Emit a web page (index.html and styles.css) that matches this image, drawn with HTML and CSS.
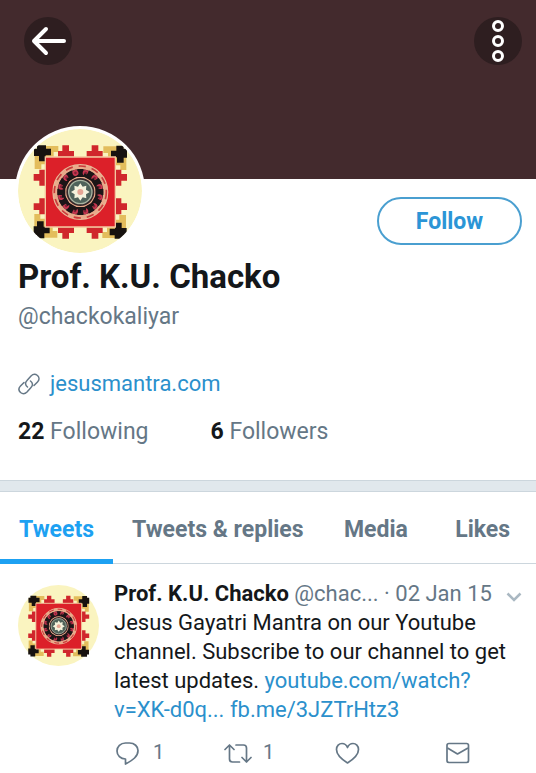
FILE: index.html
```html
<!DOCTYPE html>
<html lang="en">
<head>
<meta charset="utf-8">
<meta name="viewport" content="width=device-width, initial-scale=1">
<title>Prof. K.U. Chacko</title>
<link rel="stylesheet" href="styles.css">
</head>
<body>
<svg class="symbols" aria-hidden="true">
  <defs>
    <g id="side">
      <path fill="#e3bd5c" d="M108 79h40v18h-14v14h-36z"/>
      <path fill="#e3bd5c" d="M77 108v40h20v-14h14v-36z"/>
      <path fill="#17120f" d="M84 77h27v10h15v20h-16v18h-20v-16h-15v-22h9z"/>
      <path fill="#d0262c" d="M160 77h20v17h15v17h-48v-17h13zM248 77h20v17h13v17h-48v-17h15z"/>
    </g>
    <g id="petal">
      <path fill="#1c1517" d="M205 148h18v14h8v10h-34v-10h8z"/>
      <circle cx="230" cy="160" r="9" fill="#c93650"/>
      <circle cx="230" cy="160" r="4" fill="#7d2434"/>
    </g>
    <symbol id="mandala" viewBox="27 28 372 372">
      <circle cx="213" cy="214" r="186" fill="#faf4c0"/>
      <use href="#side"/>
      <use href="#side" transform="rotate(90 214 217)"/>
      <use href="#side" transform="rotate(180 214 217)"/>
      <use href="#side" transform="rotate(270 214 217)"/>
      <path fill="#dc2029" stroke="#f3c7a0" stroke-width="4" d="M109 112h210v210h-210z"/>
      <circle cx="214" cy="217" r="82" fill="#e9aa8a" stroke="#e8b796" stroke-width="4"/>
      <circle cx="214" cy="217" r="78" fill="none" stroke="#c93b3c" stroke-width="5" stroke-dasharray="22 18"/>
      <circle cx="214" cy="217" r="58" fill="none" stroke="#56252c" stroke-width="22"/>
      <use href="#petal"/>
      <use href="#petal" transform="rotate(30 214 217)"/>
      <use href="#petal" transform="rotate(60 214 217)"/>
      <use href="#petal" transform="rotate(90 214 217)"/>
      <use href="#petal" transform="rotate(120 214 217)"/>
      <use href="#petal" transform="rotate(150 214 217)"/>
      <use href="#petal" transform="rotate(180 214 217)"/>
      <use href="#petal" transform="rotate(210 214 217)"/>
      <use href="#petal" transform="rotate(240 214 217)"/>
      <use href="#petal" transform="rotate(270 214 217)"/>
      <use href="#petal" transform="rotate(300 214 217)"/>
      <use href="#petal" transform="rotate(330 214 217)"/>
      <circle cx="214" cy="217" r="42" fill="#35272a"/>
      <circle cx="214" cy="217" r="35" fill="#4f625a" stroke="#a9b5a1" stroke-width="4"/>
      <path fill="#f4f2dc" d="M214 191l7 10 11-3-1 12 11 7-11 7 1 12-11-3-7 10-7-10-11 3 1-12-11-7 11-7-1-12 11 3z"/>
      <circle cx="214" cy="217" r="9" fill="#e5a594"/>
    </symbol>
  </defs>
</svg>

<header class="banner">
  <button class="round-button" type="button" aria-label="Back">
    <svg viewBox="0 0 48 48"><path d="M40 24H10M22 12L10 24l12 12" fill="none" stroke="#fff" stroke-width="4" stroke-linecap="round" stroke-linejoin="round"/></svg>
  </button>
  <button class="round-button" type="button" aria-label="More options">
    <svg viewBox="0 0 48 48"><g fill="none" stroke="#fff" stroke-width="3"><circle cx="24" cy="9" r="4.500"/><circle cx="24" cy="24" r="4.500"/><circle cx="24" cy="39" r="4.500"/></g></svg>
  </button>
</header>

<main>
  <section class="profile">
    <div class="profile-top">
      <svg class="avatar" role="img" aria-label="Profile picture"><use href="#mandala"/></svg>
      <button class="follow" type="button">Follow</button>
    </div>
    <h1 class="name">Prof. K.U. Chacko</h1>
    <p class="handle">@chackokaliyar</p>
    <p class="website">
      <svg class="chain" viewBox="0 0 22 22" aria-hidden="true"><path d="M9.500 14C7 12 7 9.500 9 7.500l4-4.500c2-2 4.500-2 6.500-.5 2 2 2 4.500 0 6.500l-3.500 3.500M12.500 8c2.500 2 2.500 4.500.5 6.500l-4 4.500c-2 2-4.500 2-6.500.5-2-2-2-4.500 0-6.500L6 9.500" fill="none" stroke="currentColor" stroke-width="1.500" stroke-linecap="round"/></svg>
      <a href="#website">jesusmantra.com</a>
    </p>
    <div class="counts">
      <a href="#following"><strong>22</strong> Following</a>
      <a href="#followers"><strong>6</strong> Followers</a>
    </div>
  </section>

  <nav class="tabs">
    <a class="tab active" href="#tweets">Tweets</a>
    <a class="tab" href="#replies">Tweets &amp; replies</a>
    <a class="tab short" href="#media">Media</a>
    <a class="tab short" href="#likes">Likes</a>
  </nav>

  <article class="tweet">
    <svg class="tweet-avatar" aria-hidden="true"><use href="#mandala"/></svg>
    <div class="tweet-content">
      <div class="tweet-head">
        <p class="byline"><strong>Prof. K.U. Chacko</strong> @chac... · 02 Jan 15</p>
        <button class="icon-button" type="button" aria-label="Tweet options">
          <svg class="chevron" viewBox="0 0 16 16"><path d="M1.500 7.500L8 14l6.500-6.500" fill="none" stroke="#aab8c2" stroke-width="2.500"/></svg>
        </button>
      </div>
      <p class="tweet-text">Jesus Gayatri Mantra on our Youtube channel. Subscribe to our channel to get latest updates. <a href="#video">youtube.com/watch?<br>v=XK-d0q...</a> <a href="#post">fb.me/3JZTrHtz3</a></p>
      <div class="actions">
        <button class="icon-button" type="button" aria-label="Reply, 1">
          <svg class="icon" viewBox="0 0 28 24"><path d="M11.500 18C6.500 18 3 14.500 3 10s3.500-8 8.500-8h4c5 0 8.500 3.500 8.500 7.500 0 6-5 9.500-12.500 13.500z" fill="none" stroke="currentColor" stroke-width="1.700" stroke-linejoin="round"/></svg>
          <span>1</span>
        </button>
        <button class="icon-button" type="button" aria-label="Retweet, 1">
          <svg class="icon" viewBox="0 0 28 24"><path d="M1 8.500L5.500 4 10 8.500M5.500 4v14c0 2 1 3 3 3h7M12 4h7.500c2 0 3 1 3 3v14M18 16.500l4.500 4.500 4.500-4.500" fill="none" stroke="currentColor" stroke-width="1.700" stroke-linecap="round" stroke-linejoin="round"/></svg>
          <span>1</span>
        </button>
        <button class="icon-button" type="button" aria-label="Like">
          <svg class="icon" viewBox="0 0 28 24"><path d="M13.500 22C8 18.500 2.500 13.500 2.500 8.500c0-3.500 2.500-6 5.500-6 2.500 0 4.500 1.500 5.500 4 1-2.500 3-4 5.500-4 3 0 5.500 2.500 5.500 6 0 5-5.500 10-11 13.500z" fill="none" stroke="currentColor" stroke-width="1.700" stroke-linejoin="round"/></svg>
        </button>
        <button class="icon-button" type="button" aria-label="Send message">
          <svg class="icon" viewBox="0 0 28 24"><g fill="none" stroke="currentColor" stroke-width="1.700" stroke-linejoin="round"><rect x="3" y="2.500" width="21.500" height="19" rx="2"/><path d="M3.500 7l10 6 10.500-6"/></g></svg>
        </button>
      </div>
    </div>
  </article>
</main>
</body>
</html>
```
FILE: styles.css
```css
* {
  box-sizing: border-box;
}

body {
  margin: 0;
  background: #fff;
  color: #14171a;
  font: 23px/29px Roboto, "Liberation Sans", sans-serif;
}

h1,
p {
  margin: 0;
}

a {
  color: #2b90cc;
  text-decoration: none;
}

button {
  border: 0;
  padding: 0;
  background: none;
  font: inherit;
  color: inherit;
  cursor: pointer;
}

svg {
  display: block;
  flex: none;
}

.symbols {
  position: absolute;
  width: 0;
  height: 0;
}

.banner {
  display: flex;
  justify-content: space-between;
  align-items: flex-start;
  height: 179px;
  padding: 17px 14px 0 24px;
  background: #432a2d;
}

.round-button {
  width: 48px;
  height: 48px;
  border-radius: 50%;
  background: #2e1e20;
}

.profile {
  padding: 0 14px 34px 18px;
}

.profile-top {
  display: flex;
  justify-content: space-between;
  align-items: flex-end;
  margin: -53px 0 0 -3px;
  padding-bottom: 5px;
}

.avatar {
  width: 130px;
  height: 130px;
  padding: 3px;
  border-radius: 50%;
  background: #fff;
}

.follow {
  width: 145px;
  height: 48px;
  margin-bottom: 11px;
  border: 2px solid #4a9fd0;
  border-radius: 24px;
  color: #2b95d6;
  font-weight: 700;
}

.name {
  font-size: 33px;
  line-height: 32px;
}

.handle {
  margin-top: 9px;
  color: #657786;
}

.website {
  display: flex;
  align-items: center;
  gap: 10px;
  margin-top: 38px;
  color: #657786;
  font-size: 22px;
}

.chain {
  width: 22px;
  height: 22px;
}

.counts {
  display: flex;
  gap: 62px;
  margin-top: 19px;
}

.counts a {
  color: #657786;
}

.counts strong {
  color: #14171a;
}

.tabs {
  display: flex;
  border-bottom: 1px solid #ccd6dd;
}

.tabs::before {
  content: "";
}

.profile {
  border-bottom: 1px solid #ccd6dd;
}

.tabs {
  margin-top: 10px;
  border-top: 1px solid #ccd6dd;
  box-shadow: 0 -10px #e1e8ed;
}

.tab {
  margin-bottom: -1px;
  padding: 23px 19px 15px;
  border-bottom: 5px solid transparent;
  color: #657786;
  font-weight: 700;
  text-align: center;
}

.tab.short {
  flex: 1;
}

.tab.active {
  border-color: #1da1f2;
  color: #1da1f2;
}

.tweet {
  display: flex;
  gap: 15px;
  padding: 15px 14px 8px 18px;
  font-size: 22px;
}

.tweet-avatar {
  width: 81px;
  height: 81px;
  margin-top: 6px;
}

.tweet-content {
  flex: 1;
  min-width: 0;
}

.tweet-head {
  display: flex;
  justify-content: space-between;
}

.byline {
  color: #657786;
  white-space: nowrap;
}

.byline strong {
  color: #14171a;
}

.chevron {
  width: 16px;
  height: 16px;
}

.actions {
  display: grid;
  grid-template-columns: repeat(3, 1fr) 28px;
  margin-top: 14px;
  padding-right: 50px;
  color: #657786;
  font-size: 20px;
}

.icon-button {
  display: flex;
  align-items: center;
  gap: 11px;
}

.icon {
  width: 28px;
  height: 24px;
}
```
